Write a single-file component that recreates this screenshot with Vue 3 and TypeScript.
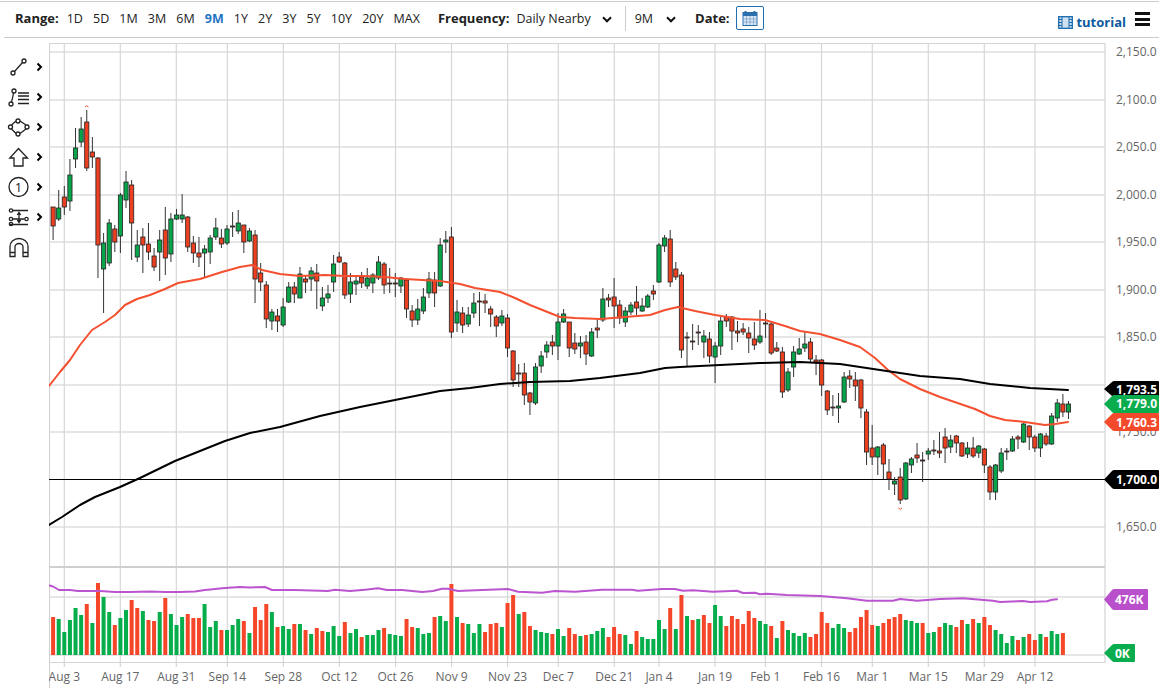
<script setup lang="ts">
type Candle = [number, number, number, number, number];
const candles: Candle[] = [
[207,207,226,240,0],[190,208,219,221,1],[186,197,207,215,0],[159,175,201,211,1],[128,148,159,168,1],[117,129,142,147,1],[110,122,168,171,0],[137,152,157,168,0],
[157,158,245,278,0],[233,243,269,313,1],[219,223,263,266,1],[225,229,242,252,0],[193,195,236,253,1],[171,182,200,208,1],[180,185,223,260,0],[230,245,257,262,1],
[228,237,245,273,0],[223,244,252,260,0],[248,256,267,271,0],[230,240,252,281,1],[207,230,258,275,0],[213,219,254,262,1],[209,215,219,220,1],[194,215,219,223,1],
[216,217,247,252,0],[236,243,253,263,0],[237,253,257,267,0],[245,249,253,278,1],[235,238,252,264,1],[218,228,237,240,1],[229,238,244,248,0],[225,229,243,245,1],
[212,226,227,237,0],[210,223,231,234,1],[225,225,242,253,0],[228,231,241,242,1],[230,235,279,303,0],[263,273,282,291,0],[281,285,319,328,0],[309,312,321,330,1],
[309,316,321,332,0],[298,307,325,327,1],[282,287,302,303,1],[282,287,294,303,0],[267,274,298,298,1],[275,279,282,293,0],[267,271,279,291,1],[264,273,281,309,0],
[287,298,306,311,1],[285,294,298,303,1],[255,264,282,292,1],[252,257,262,263,0],[262,263,295,299,0],[273,282,294,303,1],[275,281,284,295,1],[272,277,283,288,0],
[268,278,286,289,1],[273,275,283,293,1],[256,262,278,280,1],[262,264,285,294,0],[268,283,284,293,0],[273,283,284,297,0],[277,278,286,293,1],[278,280,309,318,0],
[305,311,320,327,0],[299,309,320,325,1],[288,297,311,314,1],[272,279,293,298,1],[272,280,293,307,0],[238,245,286,287,1],[231,240,242,253,1],[227,237,332,338,0],
[300,312,323,332,1],[307,313,325,333,0],[307,315,324,327,1],[293,303,313,318,1],[292,301,302,326,0],[294,301,303,313,0],[306,309,314,327,0],[315,317,326,337,0],
[310,316,323,326,1],[314,318,348,357,0],[350,351,380,387,0],[364,373,374,387,0],[363,373,395,405,0],[392,393,402,415,0],[363,367,403,405,1],[351,356,366,373,1],
[341,345,352,358,1],[335,342,346,355,0],[313,322,346,360,1],[309,314,322,323,1],[322,322,348,357,0],[333,343,349,354,0],[336,343,346,358,1],[335,342,354,365,0],
[328,332,356,357,1],[318,328,330,338,0],[288,299,320,322,1],[294,298,300,307,0],[278,297,306,328,0],[300,305,318,324,0],[307,311,322,327,1],[302,305,312,315,1],
[286,302,308,315,0],[298,306,311,312,1],[294,296,307,308,1],[285,291,294,300,0],[243,245,282,283,1],[235,238,246,252,1],[230,239,282,287,0],[262,269,277,280,0],
[272,275,350,358,0],[332,337,338,367,0],[324,341,342,350,0],[325,332,333,345,0],[330,336,342,358,1],[332,339,356,363,0],[342,346,357,383,1],[317,321,346,355,1],
[314,317,321,327,0],[316,317,331,350,0],[321,331,333,342,0],[323,329,332,335,0],[327,333,338,353,0],[322,339,345,350,0],[310,336,342,344,1],[313,323,324,338,0],
[323,324,353,355,0],[342,348,351,352,0],[347,352,392,398,0],[368,372,390,392,1],[346,352,367,377,1],[338,349,354,355,1],[332,344,348,352,1],[338,342,359,363,0],
[355,360,362,375,0],[359,360,385,396,0],[390,391,410,415,0],[395,407,408,416,0],[393,406,408,423,1],[372,377,402,403,1],[370,376,379,388,0],[372,380,386,401,0],
[379,380,408,418,0],[409,412,452,465,0],[425,448,457,465,0],[446,447,457,475,1],[443,445,464,479,0],[459,472,479,490,0],[477,481,484,495,1],[468,477,500,504,0],
[462,463,499,500,1],[457,459,465,473,1],[443,455,458,463,0],[452,460,461,482,0],[448,451,454,460,1],[440,450,451,455,0],[432,451,453,458,0],[428,437,448,463,0],
[435,440,447,453,1],[435,436,443,453,0],[442,443,456,457,0],[442,448,454,458,1],[437,448,456,458,0],[445,446,453,458,1],[448,449,465,473,0],[465,467,492,500,0],
[464,465,492,500,1],[448,453,471,473,1],[448,451,452,460,0],[436,439,451,452,1],[435,437,439,449,0],[423,424,442,443,1],[425,426,437,450,0],[435,437,448,452,0],
[433,434,448,457,1],[433,436,444,446,0],[413,416,444,445,1],[399,403,418,422,1],[394,404,412,417,0],[401,404,412,419,1]
];

// top y of every volume bar, followed by 1 for green and 0 for red
const volumes: [number, number][] = [
[617,0],[619,1],[632,1],[620,1],[608,1],[615,1],[604,0],[623,1],[583,0],[597,1],[612,1],[625,0],[618,1],[610,1],[600,0],[608,0],[611,1],[620,0],[621,0],[612,1],
[598,0],[614,1],[625,1],[617,1],[614,0],[618,0],[618,0],[604,1],[627,1],[621,1],[630,0],[630,1],[625,1],[619,1],[621,0],[633,1],[607,0],[620,0],[604,0],[612,1],
[627,0],[626,1],[629,1],[624,0],[624,1],[630,0],[634,1],[628,0],[631,0],[632,1],[626,1],[636,1],[622,0],[633,1],[629,1],[637,0],[635,1],[635,1],[630,1],[628,0],
[634,1],[635,1],[636,1],[619,0],[627,0],[628,1],[634,1],[633,1],[617,0],[616,1],[621,1],[584,0],[617,1],[623,0],[624,1],[633,1],[624,1],[632,0],[624,0],[623,0],
[627,1],[603,0],[595,0],[614,1],[612,0],[626,0],[630,1],[632,1],[633,1],[634,0],[629,1],[636,1],[628,0],[634,0],[636,1],[635,0],[634,1],[631,1],[628,1],[637,0],
[627,0],[634,0],[635,1],[644,1],[631,0],[637,1],[639,1],[639,1],[620,1],[629,1],[608,0],[629,1],[595,0],[616,1],[620,0],[619,1],[615,0],[623,0],[605,1],[616,1],
[626,0],[616,0],[619,0],[624,0],[611,0],[618,0],[621,1],[624,1],[626,0],[638,1],[621,0],[630,1],[633,1],[636,1],[633,1],[637,0],[634,0],[612,0],[623,0],[628,1],
[624,1],[628,1],[632,0],[628,0],[617,0],[610,0],[625,0],[626,1],[623,0],[619,0],[617,0],[614,0],[620,1],[621,1],[623,1],[623,0],[633,1],[632,1],[627,0],[623,1],
[625,1],[627,0],[620,0],[624,1],[619,0],[623,1],[617,0],[625,0],[630,1],[634,1],[643,1],[636,1],[640,0],[637,1],[634,0],[640,0],[634,1],[637,0],[631,1],[634,1],[633,0]
];

const cx = (i: number): number => 53.1 + 5.61 * i;

const redLine = "49,386 60,372 70,360 80,345 92,330 105,322 115,315 125,305 137,299 150,295 165,289 178,283 200,279 222,272 240,267 252,265 262,270 280,274 300,276 325,275 345,276 365,276 385,277 405,279 440,281 460,284 475,288 500,292 515,298 530,305 545,311 560,317 575,318 600,319 625,317 650,315 665,310 678,307 695,311 715,315 740,319 765,320 785,326 800,331 820,334 840,340 860,347 875,358 888,370 900,379 920,389 940,397 975,409 990,416 1005,420 1025,422 1045,425 1055,424 1068,422";
const blackLine = "49,525 62,517 80,505 95,497 120,487 140,478 175,461 200,451 225,441 250,433 280,427 320,416 360,407 400,399 440,391 470,388 500,384 530,382 570,381 600,378 640,373 665,368 680,367 720,365 760,363 800,362 840,364 880,370 920,376 960,379 990,384 1030,388 1068,390";
const purpleLine = "49.5,585.5 53,586.5 59,590 70,590 78,591 100,591 115,592 130,592 150,591.5 165,592 180,592 195,591.5 205,590 225,588 240,587 250,587.5 265,587 272,590 295,590 328,591 335,589.7 350,591 365,589.7 378,588.3 387,590 402,590 422,592 433,591 442,588.7 448,588.7 458,591 482,590 508,589 518,591.7 542,592.7 555,591 575,591.7 602,589.7 632,589.7 638,590.7 662,589 675,589 683,590.7 693,590.3 713,591.7 737,590.7 743,593 755,592.7 760,594.3 767,593.7 787,595 820,596 847,598.3 867,600.7 893,600.7 900,599 917,600.7 940,599 963,598.3 993,600.7 1000,602 1023,601 1030,602 1047,601.3 1052,599.7 1057,599.3";

const vGrids: [number, string][] = [
[64.3,"Aug 3"],[120.3,"Aug 17"],[176.3,"Aug 31"],[227.3,"Sep 14"],[283.3,"Sep 28"],[339.3,"Oct 12"],[395.5,"Oct 26"],[451.5,"Nov 9"],[507.6,"Nov 23"],
[558.3,"Dec 7"],[614.3,"Dec 21"],[659,"Jan 4"],[715,"Jan 19"],[765.3,"Feb 1"],[821.5,"Feb 16"],[872.3,"Mar 1"],[928.3,"Mar 15"],[984.3,"Mar 29"],[1035,"Apr 12"]
];
const hGrids: number[] = [52, 100, 147, 195, 242, 290, 337, 385, 432, 527, 597, 655];
const prices: [number, string][] = [
[52,"2,150.0"],[100,"2,100.0"],[147,"2,050.0"],[195,"2,000.0"],[242,"1,950.0"],[290,"1,900.0"],[337,"1,850.0"],[432,"1,750.0"],[527,"1,650.0"]
];
const ranges: string[] = ["1D","5D","1M","3M","6M","9M","1Y","2Y","3Y","5Y","10Y","20Y","MAX"];

const tag = (top: number, bottom: number, right: number): string => {
  const mid = (top + bottom) / 2;
  return `M1104 ${mid}L1112 ${top + 1}Q1113 ${top} 1114 ${top}H${right - 1}Q${right} ${top} ${right} ${top + 1}V${bottom - 1}Q${right} ${bottom} ${right - 1} ${bottom}H1114Q1113 ${bottom} 1112 ${bottom - 1}Z`;
};
</script>

<template>
  <div class="page">
    <header class="toolbar">
      <div class="group">
        <b class="label">Range:</b>
        <div class="ranges">
          <span v-for="r in ranges" :key="r" :class="{ active: r === '9M' }">{{ r }}</span>
        </div>
      </div>
      <b class="label freq">Frequency:</b>
      <span class="select">Daily Nearby</span>
      <svg class="caret" width="10" height="7" viewBox="0 0 10 7"><path d="M1 1.3 5 5.3 9 1.3" /></svg>
      <i class="divider"></i>
      <span class="period">9M</span>
      <svg class="caret caret2" width="10" height="7" viewBox="0 0 10 7"><path d="M1 1.3 5 5.3 9 1.3" /></svg>
      <b class="label date">Date:</b>
      <button class="cal" type="button" aria-label="Date">
        <svg width="16" height="16" viewBox="0 0 16 16">
          <rect x="1" y="2.5" width="14" height="13" fill="#dbe7f3" stroke="#2b6fae" />
          <rect x="1" y="2.5" width="14" height="3.5" fill="#2b6fae" />
          <path d="M3.5 1v3M12.5 1v3" stroke="#2b6fae" stroke-width="2" />
          <path d="M1 9h14M1 12h14M4.5 6v9M8 6v9M11.5 6v9" stroke="#7fa6cc" stroke-width=".8" />
        </svg>
      </button>
      <a class="tutorial">
        <svg width="15" height="13" viewBox="0 0 15 13">
          <rect x=".7" y=".7" width="13.6" height="11.6" fill="#cfe0f0" stroke="#1769ae" stroke-width="1.3" />
          <path d="M4 1v11M11 1v11M1 6.500h3M11 6.500h3M1 3.500h3M11 3.500h3M1 9.500h3M11 9.500h3" stroke="#1769ae" />
        </svg>
        tutorial
      </a>
      <div class="burger"><i></i><i></i><i></i></div>
    </header>

    <main class="body">
      <nav class="tools">
        <div class="tool">
          <svg width="24" height="24" viewBox="6 55 24 24"><circle cx="13" cy="73" r="2" /><circle cx="24" cy="61" r="2" /><path d="M14.500 71.500 22.500 62.500" /></svg>
          <svg class="chev" width="7" height="10" viewBox="0 0 7 10"><path d="M1.500 1.500 5 5 1.500 8.500" /></svg>
        </div>
        <div class="tool">
          <svg width="24" height="24" viewBox="6 85 24 24"><circle cx="14" cy="91" r="2" /><circle cx="11" cy="104" r="2" /><path d="M13.500 93C13 96 12.500 99 11.500 102M18 93h11M18 96h11M18 99.500h11M18 103.500h11" /></svg>
          <svg class="chev" width="7" height="10" viewBox="0 0 7 10"><path d="M1.500 1.500 5 5 1.500 8.500" /></svg>
        </div>
        <div class="tool">
          <svg width="24" height="24" viewBox="6 115 24 24"><path d="M16 121 11.500 125M20 121 26 125M11.500 129 16 133.500M26 129 20 133.500" /><circle cx="18" cy="121" r="2" /><circle cx="27" cy="127" r="2" /><circle cx="18" cy="134" r="2" /><circle cx="10.500" cy="127" r="2" /></svg>
          <svg class="chev" width="7" height="10" viewBox="0 0 7 10"><path d="M1.500 1.500 5 5 1.500 8.500" /></svg>
        </div>
        <div class="tool">
          <svg width="24" height="24" viewBox="6 145 24 24"><path d="M18.500 148.500 27.500 158H23V166H14V158H9.800Z" /></svg>
          <svg class="chev" width="7" height="10" viewBox="0 0 7 10"><path d="M1.500 1.500 5 5 1.500 8.500" /></svg>
        </div>
        <div class="tool">
          <svg width="24" height="24" viewBox="6 175 24 24"><circle cx="18.500" cy="187" r="9.500" /><text x="18.500" y="191.500" class="one">1</text></svg>
          <svg class="chev" width="7" height="10" viewBox="0 0 7 10"><path d="M1.500 1.500 5 5 1.500 8.500" /></svg>
        </div>
        <div class="tool">
          <svg width="24" height="24" viewBox="6 205 24 24"><path d="M13 210.500H28M13 219H24.500M9 224.500H28M19 213V222M17.300 215 19 212.500 20.700 215M17.300 220 19 222.500 20.700 220" /><circle cx="11" cy="210.500" r="1.700" /><circle cx="11" cy="219" r="1.700" /><circle cx="11" cy="224" r="1.700" /><circle cx="26.500" cy="219" r="1.700" /></svg>
          <svg class="chev" width="7" height="10" viewBox="0 0 7 10"><path d="M1.500 1.500 5 5 1.500 8.500" /></svg>
        </div>
        <div class="tool">
          <svg width="24" height="24" viewBox="6 235 24 24"><path d="M10 256.500V246.500A9 8 0 0 1 28 246.500V256.500H23V247A4 3.500 0 0 0 15 247V256.500ZM10 252.500H15M23 252.500H28" /></svg>
        </div>
      </nav>

      <svg class="chart" width="1116" height="658" viewBox="49 38 1116 658">
        <!-- grid -->
        <g class="hgrid">
          <line v-for="y in hGrids" :key="y" x1="49" :y1="y" x2="1105" :y2="y" />
        </g>
        <g class="vgrid">
          <line v-for="v in vGrids" :key="v[1]" :x1="v[0]" y1="44" :x2="v[0]" y2="667" />
        </g>
        <g class="frame">
          <path d="M49.500 688V43.500H1105V662.500H49.500" />
          <line x1="49" y1="567" x2="1105" y2="567" class="sep" />
        </g>

        <!-- volume -->
        <rect v-for="(v, i) in volumes" :key="'v' + i" :x="cx(i) - 2" :y="v[0]" width="4" :height="655 - v[0]" :class="v[1] ? 'vg' : 'vr'" />
        <polyline class="ma purple" :points="purpleLine" />

        <!-- price -->
        <line x1="49" y1="479.500" x2="1105" y2="479.500" class="level" />
        <g v-for="(c, i) in candles" :key="'c' + i">
          <line class="wick" :x1="cx(i)" :y1="c[0]" :x2="cx(i)" :y2="c[3]" />
          <rect class="body" :class="c[4] ? 'up' : 'down'" :x="cx(i) - 2.100" :y="c[1]" width="4.200" :height="Math.max(c[2] - c[1], 1)" />
        </g>
        <polyline class="ma red" :points="redLine" />
        <polyline class="ma black" :points="blackLine" />
        <path d="M85 107Q86.700 104.500 88.500 107" class="mark" />
        <path d="M898.500 508Q900.300 510.500 902 508" class="mark" />

        <!-- axes -->
        <text v-for="p in prices" :key="'t' + p[1]" x="1116" :y="p[0] + 4" class="axis">{{ p[1] }}</text>
        <clipPath id="plot-clip"><rect x="49" y="660" width="1116" height="36" /></clipPath>
        <g clip-path="url(#plot-clip)">
          <text v-for="v in vGrids" :key="'d' + v[1]" :x="v[0]" y="681" class="axis mid">{{ v[1] }}</text>
        </g>

        <!-- tags -->
        <path :d="tag(381, 397, 1159)" fill="#000" />
        <text x="1116" y="394" class="tagtext">1,793.5</text>
        <path :d="tag(413, 431, 1159)" fill="#f44a2c" />
        <text x="1116" y="426.500" class="tagtext">1,760.3</text>
        <path :d="tag(395, 413, 1159)" fill="#0aad4e" />
        <text x="1116" y="408" class="tagtext">1,779.0</text>
        <path :d="tag(470, 489, 1159)" fill="#000" />
        <text x="1116" y="484" class="tagtext">1,700.0</text>
        <path :d="tag(589, 610, 1148)" fill="#b94fcb" />
        <text x="1115" y="603.500" class="tagtext">476K</text>
        <path :d="tag(644, 662, 1135)" fill="#0aad4e" />
        <text x="1115" y="657.500" class="tagtext">0K</text>
      </svg>
    </main>
  </div>
</template>

<style>
html, body { margin: 0; background: #fff; }
</style>

<style scoped>
.page {
  width: 1165px;
  height: 696px;
  overflow: hidden;
  font-family: "Open Sans", "Liberation Sans", sans-serif;
  color: #222;
  background: #fff;
}
.toolbar {
  display: flex;
  align-items: center;
  width: 1155px;
  height: 37px;
  margin-top: 1px;
  margin-left: 4px;
  padding-left: 11px;
  padding-bottom: 2px;
  box-sizing: border-box;
  border-bottom: 1px solid #ccc;
  position: relative;
  font-size: 12.500px;
  white-space: nowrap;
}
.toolbar::before {
  content: "";
  position: absolute;
  left: -4px;
  right: 0;
  top: 0;
  height: 1px;
  background: #ccc;
}
.group { display: flex; align-items: center; }
.label { font-weight: 700; font-size: 13px; color: #222; }
.ranges { display: flex; gap: 10.100px; margin-left: 8px; }
.ranges .active { color: #1f74c4; font-weight: 700; }
.freq { margin-left: 18px; }
.select { margin-left: 7px; }
.caret { margin-left: 11px; margin-top: 3px; }
.caret path { fill: none; stroke: #111; stroke-width: 2; }
.divider { width: 1px; height: 25px; background: #ccc; margin-left: 13px; }
.period { margin-left: 9px; }
.caret2 { margin-left: 13px; }
.date { margin-left: 19px; }
.cal {
  display: flex;
  align-items: center;
  justify-content: center;
  width: 28px;
  height: 24px;
  margin-left: 6px;
  padding: 0;
  background: #fff;
  border: 1px solid #1f6fb5;
  border-radius: 2px;
}
.tutorial {
  display: flex;
  align-items: center;
  gap: 3px;
  margin-left: auto;
  margin-right: 9px;
  margin-top: 8px;
  font-weight: 700;
  font-size: 13px;
  color: #0c5b9e;
}
.burger { display: flex; flex-direction: column; gap: 2.500px; width: 15px; margin-right: 9px; margin-top: 2px; }
.burger i { height: 3px; background: #111; }
.body { display: flex; }
.tools {
  width: 49px;
  flex: none;
  padding-top: 14px;
  box-sizing: border-box;
}
.tool {
  display: flex;
  align-items: center;
  gap: 6px;
  height: 30px;
  padding-left: 6px;
}
.tool svg { fill: none; stroke: #222; stroke-width: 1.300; flex: none; }
.tool .chev { stroke: #000; stroke-width: 2; }
.one { fill: #222; stroke: none; font-size: 13px; text-anchor: middle; font-family: "Open Sans", sans-serif; }
.chart { display: block; flex: none; font-family: "Open Sans", "Liberation Sans", sans-serif; }
.hgrid line { stroke: #e6e6e6; stroke-width: 2; }
.vgrid line { stroke: #d6d6d6; stroke-width: 1.200; }
.frame path { fill: none; stroke: #d4d4d4; stroke-width: 1.200; }
.frame .sep { stroke: #cfcfcf; stroke-width: 2; }
.vg { fill: #06ad4b; }
.vr { fill: #f5462a; }
.ma { fill: none; stroke-linejoin: round; stroke-linecap: round; }
.red { stroke: #f4502f; stroke-width: 2; }
.black { stroke: #000; stroke-width: 2; }
.purple { stroke: #bb55cf; stroke-width: 2; }
.level { stroke: #000; stroke-width: 1; }
.wick { stroke: #333; stroke-width: 1; }
.body.up { fill: #08a44a; stroke: #222; stroke-width: .8; }
.body.down { fill: #ec3f20; stroke: #222; stroke-width: .8; }
.mark { fill: none; stroke: #f4502f; stroke-width: 1; }
.axis { font-size: 12px; fill: #666; }
.axis.mid { text-anchor: middle; }
.tagtext { font-size: 12px; font-weight: 700; fill: #fff; }
</style>
